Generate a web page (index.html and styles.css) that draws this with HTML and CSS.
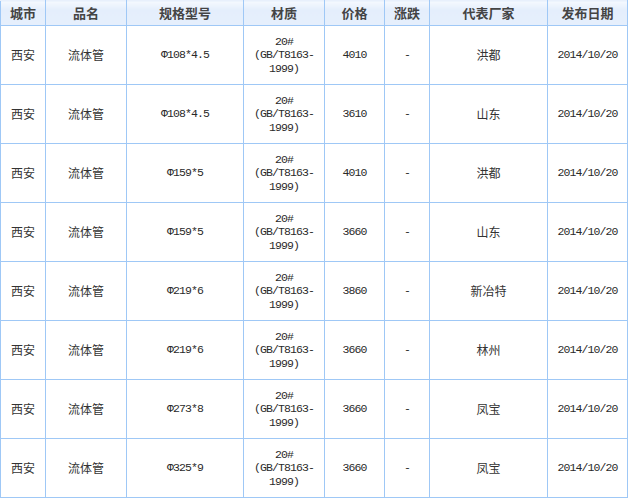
FILE: index.html
```html
<!DOCTYPE html>
<html>
<head>
<meta charset="utf-8">
<link rel="stylesheet" href="styles.css">
</head>
<body>
<table class="price-table">
  <colgroup>
    <col class="w-city"><col class="w-name"><col class="w-spec"><col class="w-mat">
    <col class="w-price"><col class="w-chg"><col class="w-maker"><col class="w-date">
  </colgroup>
  <thead>
    <tr>
      <th>城市</th><th>品名</th><th>规格型号</th><th>材质</th><th>价格</th><th>涨跌</th><th>代表厂家</th><th>发布日期</th>
    </tr>
  </thead>
  <tbody>
    <tr><td>西安</td><td>流体管</td><td class="num">Φ108*4.5</td><td class="num mat">20#<br>(GB/T8163-<br>1999)</td><td class="num">4010</td><td class="num">-</td><td>洪都</td><td class="num">2014/10/20</td></tr>
    <tr><td>西安</td><td>流体管</td><td class="num">Φ108*4.5</td><td class="num mat">20#<br>(GB/T8163-<br>1999)</td><td class="num">3610</td><td class="num">-</td><td>山东</td><td class="num">2014/10/20</td></tr>
    <tr><td>西安</td><td>流体管</td><td class="num">Φ159*5</td><td class="num mat">20#<br>(GB/T8163-<br>1999)</td><td class="num">4010</td><td class="num">-</td><td>洪都</td><td class="num">2014/10/20</td></tr>
    <tr><td>西安</td><td>流体管</td><td class="num">Φ159*5</td><td class="num mat">20#<br>(GB/T8163-<br>1999)</td><td class="num">3660</td><td class="num">-</td><td>山东</td><td class="num">2014/10/20</td></tr>
    <tr><td>西安</td><td>流体管</td><td class="num">Φ219*6</td><td class="num mat">20#<br>(GB/T8163-<br>1999)</td><td class="num">3860</td><td class="num">-</td><td>新冶特</td><td class="num">2014/10/20</td></tr>
    <tr><td>西安</td><td>流体管</td><td class="num">Φ219*6</td><td class="num mat">20#<br>(GB/T8163-<br>1999)</td><td class="num">3660</td><td class="num">-</td><td>林州</td><td class="num">2014/10/20</td></tr>
    <tr><td>西安</td><td>流体管</td><td class="num">Φ273*8</td><td class="num mat">20#<br>(GB/T8163-<br>1999)</td><td class="num">3660</td><td class="num">-</td><td>凤宝</td><td class="num">2014/10/20</td></tr>
    <tr><td>西安</td><td>流体管</td><td class="num">Φ325*9</td><td class="num mat">20#<br>(GB/T8163-<br>1999)</td><td class="num">3660</td><td class="num">-</td><td>凤宝</td><td class="num">2014/10/20</td></tr>
  </tbody>
</table>
</body>
</html>
```
FILE: styles.css
```css
html, body {
  margin: 0;
  padding: 0;
  background: #ffffff;
}

.price-table {
  border-collapse: collapse;
  table-layout: fixed;
  width: 628px;
  font-family: "Noto Sans CJK SC", "Liberation Sans", sans-serif;
  font-size: 12px;
  color: #333333;
}

.w-city { width: 45px; }
.w-name { width: 81px; }
.w-spec { width: 117px; }
.w-mat { width: 81px; }
.w-price { width: 60px; }
.w-chg { width: 45px; }
.w-maker { width: 118px; }
.w-date { width: 80px; }

.price-table th,
.price-table td {
  border: 1px solid #9fc8f6;
  padding: 0;
  text-align: center;
  vertical-align: middle;
}

.price-table th {
  height: 24px;
  font-size: 13px;
  font-weight: bold;
  color: #444444;
  line-height: 14px;
  background: linear-gradient(#f5f9fe 0%, #e4eefc 35%, #e6effc 100%);
  border-top-color: #e8f0fc;
}

.price-table td {
  height: 58px;
  line-height: 14px;
}

.price-table td.num {
  font-family: "Liberation Mono", "Noto Sans CJK SC", monospace;
  font-size: 11.5px;
  letter-spacing: -0.9px;
  color: #2a2a2a;
}

.price-table td.mat {
  line-height: 13.5px;
}
```
